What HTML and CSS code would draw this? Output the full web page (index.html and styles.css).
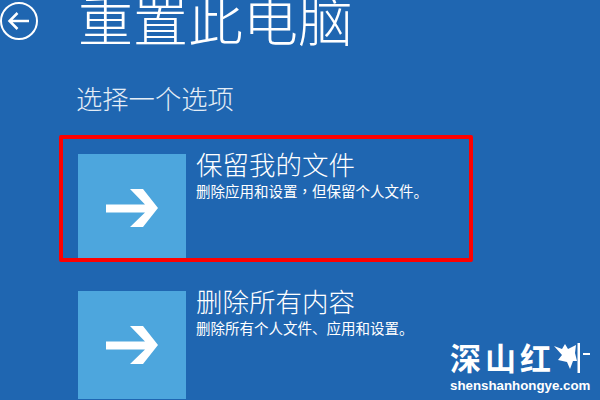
FILE: index.html
```html
<!DOCTYPE html>
<html>
<head>
    <meta charset="UTF-8">
    <title>重置此电脑</title>
    <link rel="stylesheet" href="styles.css">
</head>
<body>
<div id="content">
    <div class="head">
        <svg class="back" width="40" height="40" viewBox="0 0 40 40">
            <circle cx="19" cy="21" r="18" fill="none" stroke="#fff" stroke-width="2"/>
            <path d="M9.500 21H29M17.500 13L9.500 21L17.500 29" fill="none" stroke="#fff" stroke-width="2.500"/>
        </svg>
        <h1>重置此电脑</h1>
    </div>
    <p class="sub">选择一个选项</p>
    <ul class="options">
        <li>
            <div class="tile">
                <svg width="52" height="38" viewBox="0 0 52 38">
                    <path d="M0 15.500H39L24 0H37L52 19L37 38H24L39 23.500H0Z" fill="#fff"/>
                </svg>
            </div>
            <div class="text">
                <h2>保留我的文件</h2>
                <p>删除应用和设置<span class="comma">，</span>但保留个人文件。</p>
            </div>
        </li>
        <li>
            <div class="tile">
                <svg width="52" height="38" viewBox="0 0 52 38">
                    <path d="M0 15.500H39L24 0H37L52 19L37 38H24L39 23.500H0Z" fill="#fff"/>
                </svg>
            </div>
            <div class="text">
                <h2>删除所有内容</h2>
                <p>删除所有个人文件、应用和设置。</p>
            </div>
        </li>
    </ul>
    <div class="mark"></div>
    <div class="logo">
        <div class="logoName">深山红<svg class="leaf" width="37" height="32" viewBox="0 0 37 32">
                <path d="M1 5L9 8L12 3L15 8L23 4L22 12L24 20L20 20L17 28L14 21L5 19L9 14Z" fill="#fff"/>
                <path d="M24.500 2H27V33H24.500ZM30 12H37V14H30Z" fill="#fff"/>
            </svg></div>
        <div class="logoUrl">shenshanhongye.com</div>
    </div>
</div>
</body>
</html>
```

FILE: styles.css
```css
html,body{
    width: 100%;
    height: 100%;
    margin: 0;
    overflow: hidden;
}
body{
    background: #1f66b1;
    font-family: "Noto Sans CJK SC","Liberation Sans",sans-serif;
    color: #fff;
}
ul,li{
    margin: 0;
    padding: 0;
    list-style: none;
}
h1,h2,p{
    margin: 0;
    font-weight: 400;
}
#content{
    position: relative;
    width: 600px;
    height: 400px;
    overflow: hidden;
}
.head{
    display: flex;
    height: 62px;
}
.back{
    flex: none;
    margin-right: 38px;
}
h1{
    font-size: 55px;
    line-height: 46px;
    margin-top: -6px;
    font-weight: 300;
}
.sub{
    margin: 19px 0 0 76px;
    font-size: 26.300px;
    line-height: 34px;
    font-weight: 300;
    color: #e4edf6;
}
.options{
    margin: 39px 0 0 78px;
}
.options li{
    display: flex;
    height: 108px;
    margin-bottom: 29px;
}
.tile{
    width: 108px;
    height: 108px;
    flex: none;
    display: flex;
    align-items: center;
    justify-content: center;
    background: #4da6dd;
}
.text{
    margin-left: 10px;
}
h2{
    font-size: 26.500px;
    line-height: 32px;
    margin-top: -6px;
    font-weight: 300;
}
.text p{
    font-size: 14.500px;
    line-height: 20px;
    margin-top: 1px;
}
.comma{
    font-family: "Noto Sans CJK TC",sans-serif;
}
.mark{
    position: absolute;
    left: 59px;
    top: 135px;
    width: 414px;
    height: 127px;
    box-sizing: border-box;
    border: 4px solid #f00;
    border-radius: 2px;
}
.logo{
    position: absolute;
    left: 450px;
    top: 338px;
    width: 145px;
}
.logoName{
    display: flex;
    align-items: center;
    font-size: 31px;
    line-height: 38px;
    letter-spacing: 4px;
    font-weight: 700;
    white-space: nowrap;
}
.leaf{
    margin-left: -2px;
}
.logoUrl{
    margin-top: 2px;
    font: 700 13.300px/16px "Liberation Sans",sans-serif;
    white-space: nowrap;
}
```
